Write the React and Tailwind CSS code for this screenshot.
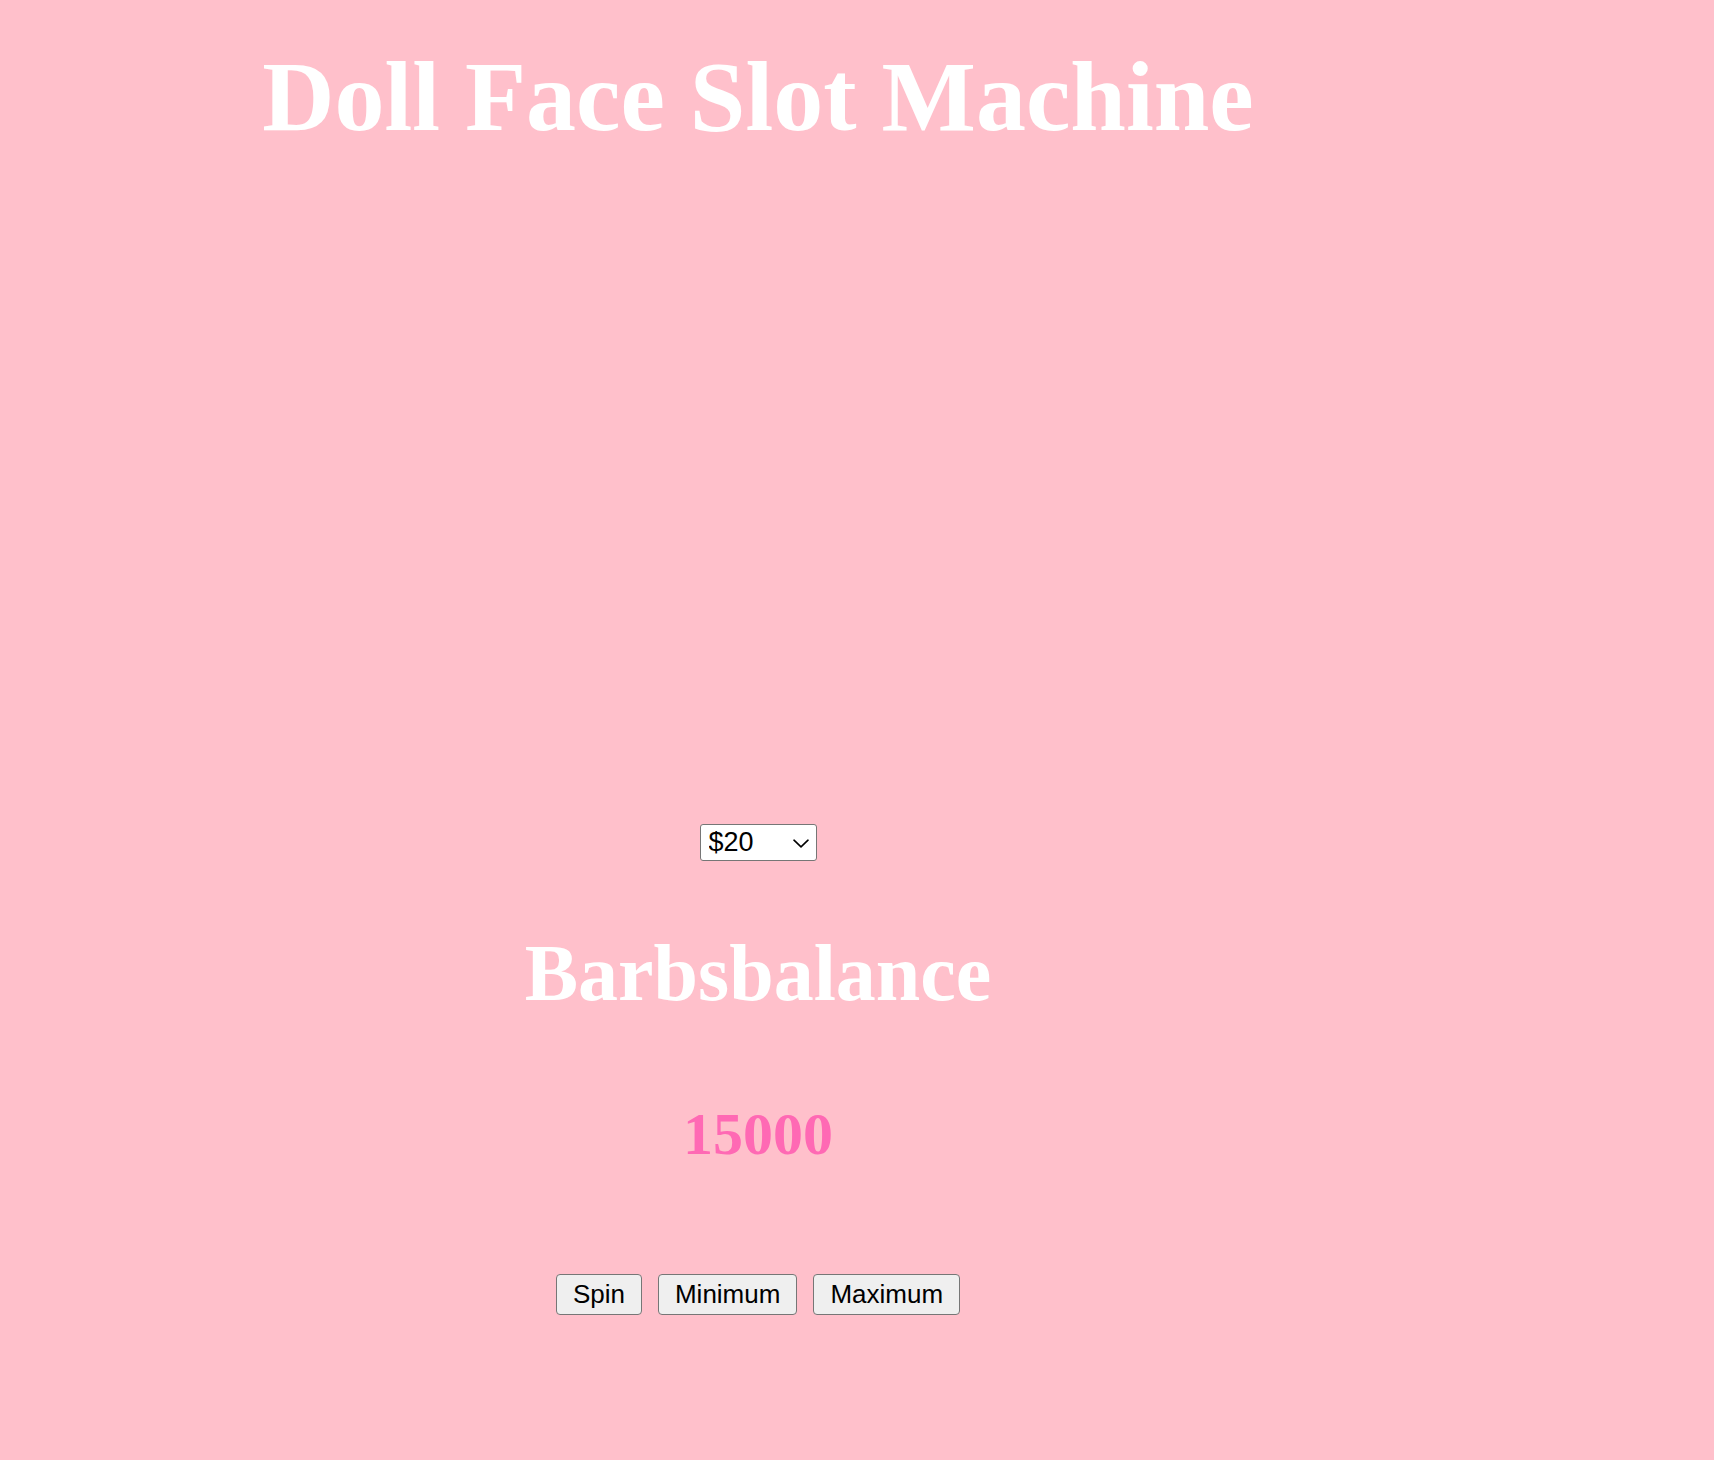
import React from "react";

export default function App() {
  return (
    <div className="min-h-[1460px] w-full bg-[#ffc0cb]">
      <div className="w-[1516px] flex flex-col items-center text-center">
        <h1 className="pt-[47px] text-[100px] leading-[100px] font-bold text-white whitespace-nowrap [font-family:'Liberation_Serif',serif]">
          Doll Face Slot Machine
        </h1>
        <div className="mt-[677px] relative w-[117px] h-[37px]">
          <select
            defaultValue="20"
            className="appearance-none w-[117px] h-[37px] bg-white border border-[#767676] rounded-[3px] pl-[8px] text-[27px] leading-[35px] text-black [font-family:'Liberation_Sans',Arial,sans-serif] outline-none"
          >
            <option value="20">$20</option>
            <option value="50">$50</option>
            <option value="100">$100</option>
          </select>
          <svg
            className="absolute left-[93px] top-[15px] pointer-events-none"
            width="16"
            height="9"
            viewBox="0 0 16 9"
            fill="none"
          >
            <path d="M1 1.2 L8 7.8 L15 1.2" stroke="#000" strokeWidth="1.6" strokeLinecap="round" strokeLinejoin="round" />
          </svg>
        </div>
        <h2 className="mt-[72px] text-[80px] leading-[80px] font-bold text-white whitespace-nowrap [font-family:'Liberation_Serif',serif]">
          Barbsbalance
        </h2>
        <h3 className="mt-[91px] text-[60px] leading-[60px] font-bold text-[#ff69b4] [font-family:'Liberation_Serif',serif]">
          15000
        </h3>
        <div className="mt-[110px] flex gap-4 [font-family:'Liberation_Sans',Arial,sans-serif]">
          <button className="h-[41px] px-[16px] bg-[#efefef] border border-[#767676] rounded-[4px] text-[26px] leading-[39px] text-black">
            Spin
          </button>
          <button className="h-[41px] px-[16px] bg-[#efefef] border border-[#767676] rounded-[4px] text-[26px] leading-[39px] text-black">
            Minimum
          </button>
          <button className="h-[41px] px-[16px] bg-[#efefef] border border-[#767676] rounded-[4px] text-[26px] leading-[39px] text-black">
            Maximum
          </button>
        </div>
      </div>
    </div>
  );
}
